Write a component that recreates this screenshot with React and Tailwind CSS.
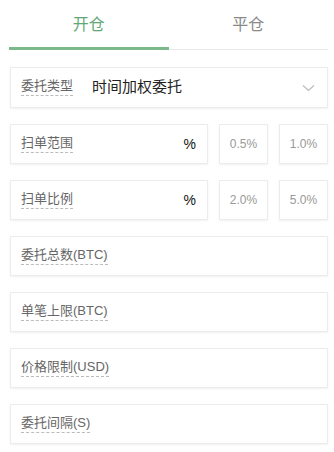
import React from "react";

const font = { fontFamily: '"Liberation Sans", "Noto Sans CJK SC", sans-serif' };

function Label({ children }) {
  return (
    <span className="text-[13px] leading-none text-[#666] border-b border-dashed border-[#bbb] pb-[3px] whitespace-nowrap">
      {children}
    </span>
  );
}

const boxCls =
  "h-10 bg-white border border-[#ececec] shadow-[0_1px_2px_rgba(0,0,0,0.06)] flex items-center";

function PctRow({ label, a, b }) {
  return (
    <div className="flex gap-[11px] mt-4">
      <div className={`${boxCls} w-[198px] pl-[10px] pr-[11px] justify-between`}>
        <Label>{label}</Label>
        <span className="text-[14px] text-[#111]">%</span>
      </div>
      <div className={`${boxCls} w-[49px] justify-center`}>
        <span className="text-[12px] text-[#999]">{a}</span>
      </div>
      <div className={`${boxCls} w-[49px] justify-center`}>
        <span className="text-[12px] text-[#999]">{b}</span>
      </div>
    </div>
  );
}

function FieldRow({ label }) {
  return (
    <div className={`${boxCls} mt-4 pl-[10px]`}>
      <Label>{label}</Label>
    </div>
  );
}

export default function App() {
  return (
    <div className="w-[334px] h-[452px] bg-white overflow-hidden" style={font}>
      <div className="pl-[9px] pr-[6px]">
        <div className="flex h-[50px] border-b border-[#eaeaea]">
          <div className="flex-1 flex flex-col items-center justify-end relative">
            <span className="text-[16px] text-[#62a877] mb-[12px]">开仓</span>
            <div className="absolute left-0 right-0 bottom-[-1px] h-[3px] bg-[#7cb98a]"></div>
          </div>
          <div className="flex-1 flex flex-col items-center justify-end">
            <span className="text-[16px] text-[#8a8a8a] mb-[12px]">平仓</span>
          </div>
        </div>
      </div>
      <div className="pl-[10px] pr-[6px] pt-[17px]">
        <div className={`${boxCls} h-[41px] pl-[10px] pr-[12px]`}>
          <Label>委托类型</Label>
          <span className="ml-[19px] text-[15px] text-[#222]">时间加权委托</span>
          <svg className="ml-auto" width="13" height="8" viewBox="0 0 13 8" fill="none">
            <path d="M1 1.5 L6.5 6.5 L12 1.5" stroke="#bbb" strokeWidth="1.2" />
          </svg>
        </div>
        <PctRow label="扫单范围" a="0.5%" b="1.0%" />
        <PctRow label="扫单比例" a="2.0%" b="5.0%" />
        <FieldRow label="委托总数(BTC)" />
        <FieldRow label="单笔上限(BTC)" />
        <FieldRow label="价格限制(USD)" />
        <FieldRow label="委托间隔(S)" />
      </div>
    </div>
  );
}
